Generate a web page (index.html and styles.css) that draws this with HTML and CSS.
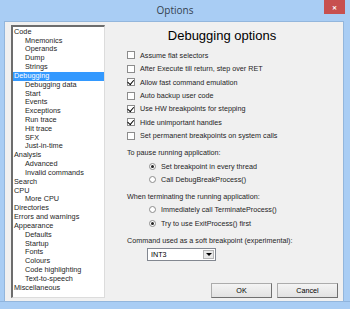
FILE: index.html
```html
<!DOCTYPE html>
<html lang="en">
<head>
    <meta charset="UTF-8">
    <title>Options</title>
    <link rel="stylesheet" href="styles.css">
</head>
<body>

    <div class="window">
        <div class="titlebar">
            <span class="title">Options</span>
            <span class="close">&#x2715;</span>
        </div>

        <div class="client">
            <ul class="tree">
                <li>Code</li>
                <li class="sub">Mnemonics</li>
                <li class="sub">Operands</li>
                <li class="sub">Dump</li>
                <li class="sub">Strings</li>
                <li class="selected">Debugging</li>
                <li class="sub">Debugging data</li>
                <li class="sub">Start</li>
                <li class="sub">Events</li>
                <li class="sub">Exceptions</li>
                <li class="sub">Run trace</li>
                <li class="sub">Hit trace</li>
                <li class="sub">SFX</li>
                <li class="sub">Just-in-time</li>
                <li>Analysis</li>
                <li class="sub">Advanced</li>
                <li class="sub">Invalid commands</li>
                <li>Search</li>
                <li>CPU</li>
                <li class="sub">More CPU</li>
                <li>Directories</li>
                <li>Errors and warnings</li>
                <li>Appearance</li>
                <li class="sub">Defaults</li>
                <li class="sub">Startup</li>
                <li class="sub">Fonts</li>
                <li class="sub">Colours</li>
                <li class="sub">Code highlighting</li>
                <li class="sub">Text-to-speech</li>
                <li>Miscellaneous</li>
            </ul>

            <div class="panel">
                <h2 class="panel-title">Debugging options</h2>

                <div class="checks">
                    <label class="row"><span class="check"></span>Assume flat selectors</label>
                    <label class="row"><span class="check"></span>After Execute till return, step over RET</label>
                    <label class="row"><span class="check on"></span>Allow fast command emulation</label>
                    <label class="row"><span class="check"></span>Auto backup user code</label>
                    <label class="row"><span class="check on"></span>Use HW breakpoints for stepping</label>
                    <label class="row"><span class="check on"></span>Hide unimportant handles</label>
                    <label class="row"><span class="check"></span>Set permanent breakpoints on system calls</label>
                </div>

                <div class="group">
                    <div class="caption">To pause running application:</div>
                    <label class="row radio-row"><span class="radio on"></span>Set breakpoint in every thread</label>
                    <label class="row radio-row"><span class="radio"></span>Call DebugBreakProcess()</label>
                </div>

                <div class="group">
                    <div class="caption">When terminating the running application:</div>
                    <label class="row radio-row"><span class="radio"></span>Immediately call TerminateProcess()</label>
                    <label class="row radio-row"><span class="radio on"></span>Try to use ExitProcess() first</label>
                </div>

                <div class="group">
                    <div class="caption">Command used as a soft breakpoint (experimental):</div>
                    <div class="select">
                        <span class="select-value">INT3</span>
                        <span class="select-arrow"></span>
                    </div>
                </div>

                <div class="buttons">
                    <button class="btn">OK</button>
                    <button class="btn">Cancel</button>
                </div>
            </div>
        </div>
    </div>

</body>
</html>
```

FILE: styles.css
```css
* {
    margin: 0;
    padding: 0;
    box-sizing: border-box;
    font-family: 'Liberation Sans', Arial, sans-serif;
}

body {
    width: 350px;
    height: 309px;
    overflow: hidden;
    background: #a9cdf4;
}

.window {
    height: 309px;
    display: flex;
    flex-direction: column;
    border-bottom: 7px solid #a9cdf4;
    box-shadow: inset 0 -4px 0 -3px #8fb4dd;
}

.titlebar {
    height: 21px;
    display: flex;
    justify-content: center;
    align-items: center;
    padding-bottom: 1px;
}

.title {
    font-family: 'Open Sans', 'Liberation Sans', sans-serif;
    font-size: 10px;
    color: #34414f;
}

.close {
    position: absolute;
    top: 0;
    left: 324px;
    width: 21px;
    height: 14px;
    background: #c7504f;
    color: #fff;
    font-size: 6px;
    font-weight: bold;
    display: flex;
    align-items: center;
    justify-content: center;
}

.client {
    flex: 1;
    margin: 0 6px 0 4px;
    background: #f0f0f0;
    border: 1px solid #93b6dc;
    display: flex;
    padding: 3px 0 3px 6px;
}

.tree {
    list-style: none;
    width: 94px;
    height: 273px;
    background: #fff;
    border-top: 2px solid #6d6d6d;
    border-left: 2px solid #6d6d6d;
    border-right: 1px solid #dcdcdc;
    border-bottom: 1px solid #dcdcdc;
    padding: 1px 0 0 0;
}

.tree li {
    font-size: 7.3px;
    line-height: 8.83px;
    height: 8.83px;
    color: #1e1e1e;
    padding-left: 1px;
    white-space: nowrap;
}

.tree li.sub {
    padding-left: 12px;
}

.tree li.selected {
    background: #3399ff;
    color: #fff;
}

.panel {
    flex: 1;
    display: flex;
    flex-direction: column;
    padding-left: 22px;
}

.panel-title {
    font-size: 13px;
    font-weight: normal;
    color: #000;
    text-align: center;
    margin-left: -22px;
    padding-right: 4px;
    line-height: 16px;
    margin-top: 3px;
    margin-bottom: 5px;
}

.row {
    display: flex;
    align-items: center;
    height: 13.4px;
    font-size: 7.2px;
    color: #1e1e1e;
    white-space: nowrap;
}

.check {
    width: 8px;
    height: 8px;
    border: 1px solid #8c8c8c;
    background: #fff;
    margin-right: 5px;
    position: relative;
}

.check.on::after {
    content: "";
    position: absolute;
    left: 1px;
    top: 0px;
    width: 3px;
    height: 5px;
    border-right: 1.5px solid #000;
    border-bottom: 1.5px solid #000;
    transform: rotate(40deg);
    transform-origin: 60% 40%;
}

.group {
    margin-top: 4px;
}

.caption {
    font-size: 7.2px;
    line-height: 13px;
    height: 13px;
    color: #1e1e1e;
    white-space: nowrap;
}

.radio-row {
    padding-left: 22px;
}

.radio {
    width: 7px;
    height: 7px;
    border-radius: 50%;
    border: 1px solid #8c8c8c;
    background: #fff;
    margin-right: 5px;
    display: flex;
    align-items: center;
    justify-content: center;
}

.radio.on::after {
    content: "";
    width: 3px;
    height: 3px;
    border-radius: 50%;
    background: #222;
}

.select {
    margin: 1px 0 0 20px;
    width: 69px;
    height: 13px;
    background: #fff;
    border: 1px solid #828790;
    display: flex;
    align-items: center;
    padding: 1px;
}

.select-value {
    flex: 1;
    font-size: 7.2px;
    padding-left: 2px;
    color: #000;
}

.select-arrow {
    width: 11px;
    height: 9px;
    background: #e8e8e8;
    border: 1px solid #b4b4b4;
    position: relative;
}

.select-arrow::after {
    content: "";
    position: absolute;
    left: 2px;
    top: 2px;
    border-left: 3px solid transparent;
    border-right: 3px solid transparent;
    border-top: 3px solid #000;
}

.buttons {
    display: flex;
    gap: 5px;
    margin-top: 22px;
    padding-left: 84px;
}

.btn {
    width: 61px;
    height: 15px;
    font-size: 7.2px;
    color: #000;
    background: linear-gradient(#f4f4f4, #e2e2e2);
    border: 1px solid #acacac;
    border-right-color: #707070;
    border-bottom-color: #707070;
}
```
